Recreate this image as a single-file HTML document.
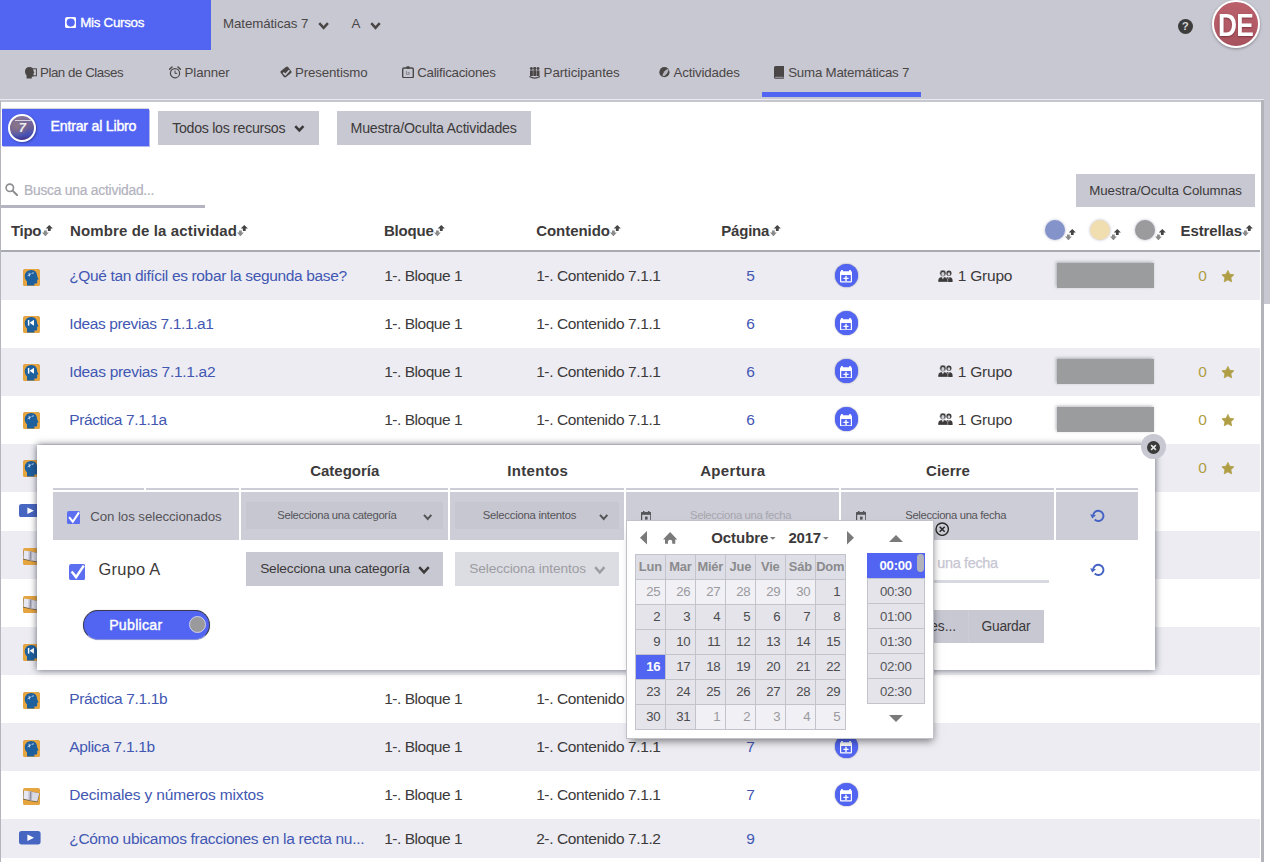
<!DOCTYPE html>
<html lang="es"><head><meta charset="utf-8"><title>Suma Matemáticas 7</title>
<style>
html,body{margin:0;padding:0}
body{width:1270px;height:862px;overflow:hidden;position:relative;background:#c8c8d2;font-family:'Liberation Sans', sans-serif;}
</style></head><body>
<div style="position:absolute;left:1.20px;top:101.40px;width:1259.80px;height:760.60px;background:#fff;"></div>
<div style="position:absolute;left:0.00px;top:98.70px;width:1264.40px;height:1.30px;background:#e9e9ef;"></div>
<div style="position:absolute;left:0.00px;top:100.00px;width:1264.40px;height:1.60px;background:#c6c6cf;"></div>
<div style="position:absolute;left:0.00px;top:101.40px;width:1.40px;height:760.60px;background:#b4b4bd;"></div>
<div style="position:absolute;left:1261.00px;top:100.00px;width:3.00px;height:762.00px;background:#b3b3ba;"></div>
<div style="position:absolute;left:1264.00px;top:304.40px;width:6.00px;height:557.60px;background:#fff;"></div>
<div style="position:absolute;left:0.00px;top:0.00px;width:211.00px;height:50.00px;background:#5165f2;"></div>
<svg style="position:absolute;left:64.80px;top:16.80px;" width="11.40" height="11.20" viewBox="0 0 11.4 11.2"><rect width="11.4" height="11.2" rx="2.2" fill="#fff"/><circle cx="5.7" cy="5.6" r="4.1" fill="#5165f2"/></svg>
<span style="position:absolute;left:80.20px;top:15.61px;font-size:13.4px;line-height:1;color:#fff;white-space:nowrap;letter-spacing:-0.298px;-webkit-text-stroke:0.35px #fff;">Mis Cursos</span>
<span style="position:absolute;left:223.00px;top:16.70px;font-size:13.3px;line-height:1;color:#4a4646;white-space:nowrap;letter-spacing:-0.091px;">Matemáticas 7</span>
<svg style="position:absolute;left:317.40px;top:20.60px;" width="13.20" height="9.40" viewBox="-1 -1 13.20 9.40"><polyline points="1.25,1.12 5.60,5.85 9.95,1.12" fill="none" stroke="#4a4646" stroke-width="2.5" stroke-linejoin="miter"/></svg>
<span style="position:absolute;left:351.60px;top:16.70px;font-size:13.3px;line-height:1;color:#4a4646;white-space:nowrap;">A</span>
<svg style="position:absolute;left:369.00px;top:20.60px;" width="13.00" height="9.40" viewBox="-1 -1 13.00 9.40"><polyline points="1.25,1.12 5.50,5.85 9.75,1.12" fill="none" stroke="#4a4646" stroke-width="2.5" stroke-linejoin="miter"/></svg>
<div style="position:absolute;left:1177.6px;top:18.6px;width:15.2px;height:15.2px;border-radius:50%;background:#3c3c3c"></div>
<span style="position:absolute;left:1181.75px;top:20.83px;font-size:11.5px;line-height:1;color:#d4d4d8;white-space:nowrap;font-weight:700;">?</span>
<div style="position:absolute;left:1212px;top:0.2px;width:44px;height:44px;border-radius:50%;border:2px solid #fff;background:linear-gradient(#b9606b 0%,#b35b66 55%,#a5535e 100%);box-shadow:0 1px 3px rgba(0,0,0,.35)"></div>
<span style="position:absolute;left:1218.46px;top:10.23px;font-size:31.5px;line-height:1;color:#fff;white-space:nowrap;font-weight:700;transform:scaleX(0.835);transform-origin:0 0;letter-spacing:-1px;text-shadow:0 1px 2px rgba(90,30,40,.6);">DE</span>
<svg style="position:absolute;left:25.00px;top:67.20px;" width="12.00" height="11.60" viewBox="0 0 12 11.6"><rect x="6" y="1.8" width="5.4" height="7" fill="none" stroke="#4a4646" stroke-width="1"/><path d="M4.6 0 C1.6 0 0 2 0 4.6 C0 6.6 .9 7.8 1.6 8.6 L1.6 11.6 L6.8 11.6 L6.8 9.6 L8.6 9.6 L8.6 6.2 L9.4 5.6 L8.6 4.2 C8.6 1.6 7 0 4.6 0Z" fill="#4a4646"/></svg>
<span style="position:absolute;left:40.00px;top:65.69px;font-size:13.3px;line-height:1;color:#4a4646;white-space:nowrap;letter-spacing:-0.452px;">Plan de Clases</span>
<svg style="position:absolute;left:169.00px;top:66.00px;" width="12.00" height="12.80" viewBox="0 0 12 12.8"><circle cx="6" cy="7.2" r="4.6" fill="none" stroke="#4a4646" stroke-width="1.2"/><path d="M6 4.6V7.4H8.2" fill="none" stroke="#4a4646" stroke-width="1"/><path d="M.6 3.2L3 1M11.4 3.2L9 1" stroke="#4a4646" stroke-width="1.5" stroke-linecap="round"/></svg>
<span style="position:absolute;left:184.60px;top:65.69px;font-size:13.3px;line-height:1;color:#4a4646;white-space:nowrap;letter-spacing:-0.110px;">Planner</span>
<svg style="position:absolute;left:279.60px;top:66.40px;" width="12.00" height="12.00" viewBox="0 0 12 12"><rect x="1.3" y="2" width="9.4" height="8" rx="1.7" transform="rotate(-38 6 6)" fill="#4a4646"/><path d="M3.2 6.6L5.3 8.7L9.4 4.2" fill="none" stroke="#c8c8d2" stroke-width="1.7"/></svg>
<span style="position:absolute;left:295.00px;top:65.69px;font-size:13.3px;line-height:1;color:#4a4646;white-space:nowrap;letter-spacing:-0.131px;">Presentismo</span>
<svg style="position:absolute;left:402.00px;top:65.80px;" width="12.00" height="12.40" viewBox="0 0 12 12.4"><rect x=".7" y="2" width="10.6" height="9.7" rx="1.3" fill="none" stroke="#4a4646" stroke-width="1.4"/><rect x="4.4" y=".2" width="3.2" height="2.6" rx=".6" fill="#4a4646"/><path d="M4.4 5V8.4H7.2V6.4H5.6" fill="none" stroke="#77757a" stroke-width=".8"/></svg>
<span style="position:absolute;left:417.20px;top:65.69px;font-size:13.3px;line-height:1;color:#4a4646;white-space:nowrap;letter-spacing:-0.260px;">Calificaciones</span>
<svg style="position:absolute;left:529.00px;top:67.00px;" width="11.40" height="11.80" viewBox="0 0 11.4 11.8"><circle cx="2.4" cy="1.6" r="1.5" fill="#4a4646"/><circle cx="5.7" cy="1.4" r="1.5" fill="#4a4646"/><circle cx="9" cy="1.6" r="1.5" fill="#4a4646"/><rect x="1" y="3.4" width="2.9" height="5.6" fill="#4a4646"/><rect x="4.3" y="3.2" width="2.9" height="5.8" fill="#4a4646"/><rect x="7.6" y="3.4" width="2.9" height="5.6" fill="#4a4646"/><path d="M.4 9.6 Q5.7 12.6 11 9.6" fill="none" stroke="#4a4646" stroke-width="1.2"/></svg>
<span style="position:absolute;left:543.60px;top:65.69px;font-size:13.3px;line-height:1;color:#4a4646;white-space:nowrap;letter-spacing:-0.059px;">Participantes</span>
<svg style="position:absolute;left:659.00px;top:67.40px;" width="10.80" height="10.40" viewBox="0 0 10.8 10.4"><circle cx="5.4" cy="5.2" r="5.1" fill="#4a4646"/><path d="M3.4 8.6 C4.2 5.4 6.2 2.8 9.4 1.8 C9.8 4.4 8 7.6 5 9.2Z" fill="#b4b4bc"/></svg>
<span style="position:absolute;left:673.60px;top:65.69px;font-size:13.3px;line-height:1;color:#4a4646;white-space:nowrap;letter-spacing:-0.178px;">Actividades</span>
<svg style="position:absolute;left:773.60px;top:66.00px;" width="10.80" height="12.80" viewBox="0 0 10.8 12.8"><path d="M0 1.6Q0 0 1.6 0H10.8V11.2H9.8V12.8H1.6Q0 12.8 0 11.2Z" fill="#4a4646"/><path d="M1.2 11.3H9.4" stroke="#c8c8d2" stroke-width=".7"/></svg>
<span style="position:absolute;left:788.20px;top:65.69px;font-size:13.3px;line-height:1;color:#4a4646;white-space:nowrap;letter-spacing:-0.216px;">Suma Matemáticas 7</span>
<div style="position:absolute;left:762.00px;top:92.00px;width:159.00px;height:5.00px;background:#5165f2;"></div>
<div style="position:absolute;left:2.00px;top:108.80px;width:147.40px;height:37.00px;background:#5165f2;box-shadow:1px 1px 0 #b4b8ea,0 -0.6px 0 #b8b8c4"></div>
<div style="position:absolute;left:7.9px;top:113.5px;width:24.5px;height:24.3px;border-radius:50%;border:2.4px solid #fff;background:radial-gradient(circle at 28% 40%,#8a7488 0%,rgba(125,105,135,0) 55%),linear-gradient(175deg,#8878a0 0%,#74669a 30%,#6c5e94 50%,#4350b8 78%,#4a2f78 100%);box-shadow:1px 1px 2px rgba(30,30,90,.5)"></div>
<div style="position:absolute;left:15.00px;top:119.80px;width:15.60px;height:0.80px;background:rgba(235,235,245,.8);"></div>
<span style="position:absolute;left:18.81px;top:120.95px;font-size:13px;line-height:1;color:#ececf0;white-space:nowrap;font-weight:700;font-style:italic;">7</span>
<span style="position:absolute;left:50.57px;top:118.83px;font-size:14.2px;line-height:1;color:#fff;white-space:nowrap;letter-spacing:-0.230px;-webkit-text-stroke:0.4px #fff;">Entrar al Libro</span>
<div style="position:absolute;left:158.00px;top:111.00px;width:161.00px;height:33.60px;background:#c8c8d2;"></div>
<span style="position:absolute;left:172.17px;top:120.83px;font-size:14.2px;line-height:1;color:#3c3a3a;white-space:nowrap;letter-spacing:-0.291px;">Todos los recursos</span>
<svg style="position:absolute;left:293.30px;top:123.60px;" width="12.70" height="9.00" viewBox="-1 -1 12.70 9.00"><polyline points="1.25,1.12 5.35,5.45 9.45,1.12" fill="none" stroke="#3c3a3a" stroke-width="2.5" stroke-linejoin="miter"/></svg>
<div style="position:absolute;left:337.00px;top:111.00px;width:194.00px;height:33.60px;background:#c8c8d2;"></div>
<span style="position:absolute;left:350.57px;top:120.83px;font-size:14.2px;line-height:1;color:#3c3a3a;white-space:nowrap;letter-spacing:-0.225px;">Muestra/Oculta Actividades</span>
<svg style="position:absolute;left:5.40px;top:183.40px;" width="13.00" height="13.00" viewBox="0 0 13 13"><circle cx="4.8" cy="4.8" r="3.7" fill="none" stroke="#8c8c90" stroke-width="1.6"/><path d="M7.6 7.6L12 12" stroke="#8c8c90" stroke-width="2" stroke-linecap="round"/></svg>
<span style="position:absolute;left:23.99px;top:183.97px;font-size:13.8px;line-height:1;color:#b2b2bd;white-space:nowrap;letter-spacing:-0.216px;-webkit-text-stroke:0.2px #b2b2bd;">Busca una actividad...</span>
<div style="position:absolute;left:1.40px;top:205.40px;width:203.40px;height:2.60px;background:#b4b4c0;"></div>
<div style="position:absolute;left:1076.00px;top:174.00px;width:179.20px;height:32.80px;background:#c8c8d2;"></div>
<span style="position:absolute;left:1089.20px;top:183.69px;font-size:13.3px;line-height:1;color:#3c3a3a;white-space:nowrap;letter-spacing:-0.044px;">Muestra/Oculta Columnas</span>
<span style="position:absolute;left:10.95px;top:222.85px;font-size:15px;line-height:1;color:#3c3a3a;white-space:nowrap;font-weight:700;letter-spacing:-0.276px;">Tipo</span>
<svg style="position:absolute;left:41.60px;top:224.80px;" width="11.00" height="11.60" viewBox="0 0 11 11.6"><path d="M3.4 11.4L0 7.6H2V5.4H4.8V7.6H6.8Z" fill="#8a8a8a"/><path d="M7.3 0L10.9 3.6H8.7V6H5.9V3.6H3.7Z" fill="#444"/></svg>
<span style="position:absolute;left:69.95px;top:222.85px;font-size:15px;line-height:1;color:#3c3a3a;white-space:nowrap;font-weight:700;letter-spacing:0.131px;">Nombre de la actividad</span>
<svg style="position:absolute;left:237.20px;top:224.80px;" width="11.00" height="11.60" viewBox="0 0 11 11.6"><path d="M3.4 11.4L0 7.6H2V5.4H4.8V7.6H6.8Z" fill="#8a8a8a"/><path d="M7.3 0L10.9 3.6H8.7V6H5.9V3.6H3.7Z" fill="#444"/></svg>
<span style="position:absolute;left:383.95px;top:222.85px;font-size:15px;line-height:1;color:#3c3a3a;white-space:nowrap;font-weight:700;letter-spacing:-0.185px;">Bloque</span>
<svg style="position:absolute;left:434.00px;top:224.80px;" width="11.00" height="11.60" viewBox="0 0 11 11.6"><path d="M3.4 11.4L0 7.6H2V5.4H4.8V7.6H6.8Z" fill="#8a8a8a"/><path d="M7.3 0L10.9 3.6H8.7V6H5.9V3.6H3.7Z" fill="#444"/></svg>
<span style="position:absolute;left:536.15px;top:222.85px;font-size:15px;line-height:1;color:#3c3a3a;white-space:nowrap;font-weight:700;letter-spacing:-0.039px;">Contenido</span>
<svg style="position:absolute;left:610.20px;top:224.80px;" width="11.00" height="11.60" viewBox="0 0 11 11.6"><path d="M3.4 11.4L0 7.6H2V5.4H4.8V7.6H6.8Z" fill="#8a8a8a"/><path d="M7.3 0L10.9 3.6H8.7V6H5.9V3.6H3.7Z" fill="#444"/></svg>
<span style="position:absolute;left:721.15px;top:222.85px;font-size:15px;line-height:1;color:#3c3a3a;white-space:nowrap;font-weight:700;letter-spacing:-0.175px;">Página</span>
<svg style="position:absolute;left:769.60px;top:224.80px;" width="11.00" height="11.60" viewBox="0 0 11 11.6"><path d="M3.4 11.4L0 7.6H2V5.4H4.8V7.6H6.8Z" fill="#8a8a8a"/><path d="M7.3 0L10.9 3.6H8.7V6H5.9V3.6H3.7Z" fill="#444"/></svg>
<span style="position:absolute;left:1180.55px;top:222.85px;font-size:15px;line-height:1;color:#3c3a3a;white-space:nowrap;font-weight:700;letter-spacing:-0.132px;">Estrellas</span>
<svg style="position:absolute;left:1242.20px;top:224.80px;" width="11.00" height="11.60" viewBox="0 0 11 11.6"><path d="M3.4 11.4L0 7.6H2V5.4H4.8V7.6H6.8Z" fill="#8a8a8a"/><path d="M7.3 0L10.9 3.6H8.7V6H5.9V3.6H3.7Z" fill="#444"/></svg>
<div style="position:absolute;left:1045px;top:219.8px;width:20px;height:20px;border-radius:50%;background:#8494cb;box-shadow:0 0 3px rgba(120,120,160,.55)"></div>
<svg style="position:absolute;left:1065.40px;top:228.60px;" width="11.00" height="11.60" viewBox="0 0 11 11.6"><path d="M3.4 11.4L0 7.6H2V5.4H4.8V7.6H6.8Z" fill="#8a8a8a"/><path d="M7.3 0L10.9 3.6H8.7V6H5.9V3.6H3.7Z" fill="#444"/></svg>
<div style="position:absolute;left:1090px;top:219.8px;width:20px;height:20px;border-radius:50%;background:#f1deb0;box-shadow:0 0 3px rgba(120,120,160,.55)"></div>
<svg style="position:absolute;left:1110.40px;top:228.60px;" width="11.00" height="11.60" viewBox="0 0 11 11.6"><path d="M3.4 11.4L0 7.6H2V5.4H4.8V7.6H6.8Z" fill="#8a8a8a"/><path d="M7.3 0L10.9 3.6H8.7V6H5.9V3.6H3.7Z" fill="#444"/></svg>
<div style="position:absolute;left:1135px;top:219.8px;width:20px;height:20px;border-radius:50%;background:#9b9b9d;box-shadow:0 0 3px rgba(120,120,160,.55)"></div>
<svg style="position:absolute;left:1155.40px;top:228.60px;" width="11.00" height="11.60" viewBox="0 0 11 11.6"><path d="M3.4 11.4L0 7.6H2V5.4H4.8V7.6H6.8Z" fill="#8a8a8a"/><path d="M7.3 0L10.9 3.6H8.7V6H5.9V3.6H3.7Z" fill="#444"/></svg>
<div style="position:absolute;left:1.40px;top:250.00px;width:1258.60px;height:2.40px;background:#a9a9b1;"></div>
<div style="position:absolute;left:1.40px;top:252.40px;width:1258.60px;height:47.20px;background:#ececf2;"></div>
<div style="position:absolute;left:1.40px;top:347.60px;width:1258.60px;height:48.00px;background:#ececf2;"></div>
<div style="position:absolute;left:1.40px;top:443.60px;width:1258.60px;height:48.00px;background:#ececf2;"></div>
<div style="position:absolute;left:1.40px;top:531.00px;width:1258.60px;height:48.00px;background:#ececf2;"></div>
<div style="position:absolute;left:1.40px;top:627.00px;width:1258.60px;height:48.00px;background:#ececf2;"></div>
<div style="position:absolute;left:1.40px;top:723.00px;width:1258.60px;height:48.00px;background:#ececf2;"></div>
<div style="position:absolute;left:1.40px;top:819.00px;width:1258.60px;height:38.80px;background:#ececf2;"></div>
<svg style="position:absolute;left:23.30px;top:268.50px;filter:drop-shadow(0 0 .6px rgba(120,80,20,.6));" width="17.00" height="17.00" viewBox="0 0 17 17"><rect x="0" y="0" width="17" height="17" rx="2.6" fill="#e6a53f"/><path d="M8.4 1C4.4 1 1.8 3.8 1.8 7.2C1.8 9.6 2.8 11.2 4 12.2V16.6H11.4V14.4H13.2Q14.2 14.4 14.2 13.4V10.8L15.6 10.2L14.2 7.6C14.2 3.8 12 1 8.4 1Z" fill="#1e5f9e"/><path d="M4.6 6.8L8 4.8M6 3.8L6.6 7.4M8.6 4.4L10.8 3.8" stroke="#cfe0f0" stroke-width=".9"/></svg>
<span style="position:absolute;left:69.23px;top:267.93px;font-size:15.5px;line-height:1;color:#4257b2;white-space:nowrap;letter-spacing:-0.346px;">¿Qué tan difícil es robar la segunda base?</span>
<span style="position:absolute;left:384.14px;top:267.93px;font-size:15.5px;line-height:1;color:#3c3a3a;white-space:nowrap;letter-spacing:-0.464px;">1-. Bloque 1</span>
<span style="position:absolute;left:536.13px;top:267.93px;font-size:15.5px;line-height:1;color:#3c3a3a;white-space:nowrap;letter-spacing:-0.389px;">1-. Contenido 7.1.1</span>
<span style="position:absolute;left:746.33px;top:267.93px;font-size:15.5px;line-height:1;color:#4257b2;white-space:nowrap;">5</span>
<div style="position:absolute;left:835.00px;top:263.60px;width:23.4px;height:23.4px;border-radius:50%;background:#5165f2;box-shadow:0 0 1.5px rgba(60,60,120,.8)"></div>
<svg style="position:absolute;left:840.00px;top:270.20px;" width="12.00" height="12.60" viewBox="0 0 12 12.6"><rect x="1.1" y="0" width="1.7" height="2" fill="#fff"/><rect x="9.2" y="0" width="1.7" height="2" fill="#fff"/><path d="M0 2.2Q0 1.2 1 1.2H11Q12 1.2 12 2.2V5H0Z" fill="#fff"/><rect x=".6" y="4.4" width="10.8" height="7.5" rx=".6" fill="none" stroke="#fff" stroke-width="1.2"/><path d="M6 5.8V11M3.4 8.4H8.6" stroke="#fff" stroke-width="1.4"/></svg>
<svg style="position:absolute;left:938.30px;top:269.60px;" width="15.00" height="12.20" viewBox="0 0 15 12.2"><circle cx="10.9" cy="3.2" r="2.6" fill="#3c3a3a"/><ellipse cx="10.9" cy="3.9" rx="1.35" ry="1.6" fill="#cfcfd6"/><path d="M7.2 12V10.6Q7.2 7 10.9 7Q14.6 7 14.6 10.6V12Z" fill="#3c3a3a"/><path d="M10 7.2L10.9 9L11.8 7.2Z" fill="#e4e4ea"/><circle cx="4.9" cy="3.2" r="3.1" fill="#3c3a3a" stroke="#ececf2" stroke-width=".5"/><ellipse cx="4.9" cy="4" rx="1.6" ry="1.9" fill="#cfcfd6"/><path d="M0 12.2V10.6Q0 6.8 4.9 6.8Q9.8 6.8 9.8 10.6V12.2Z" fill="#3c3a3a" stroke="#ececf2" stroke-width=".5"/><path d="M3.8 7L4.9 9.4L6 7Z" fill="#e4e4ea"/></svg>
<span style="position:absolute;left:957.74px;top:267.93px;font-size:15.5px;line-height:1;color:#3c3a3a;white-space:nowrap;letter-spacing:-0.210px;">1 Grupo</span>
<div style="position:absolute;left:1057.00px;top:263.40px;width:97.00px;height:24.60px;background:#9b9c9e;box-shadow:-1px -1px 3px rgba(90,90,110,.45)"></div>
<span style="position:absolute;left:1198.34px;top:267.93px;font-size:15.5px;line-height:1;color:#b09e45;white-space:nowrap;">0</span>
<svg style="position:absolute;left:1220.00px;top:268.00px;" width="16.00" height="16.00" viewBox="0 0 16 16"><polygon points="7.90,2.45 9.72,6.24 13.89,6.80 10.85,9.71 11.60,13.85 7.90,11.85 4.20,13.85 4.95,9.71 1.91,6.80 6.08,6.24" fill="#b09e45" stroke="#b09e45" stroke-width=".8" stroke-linejoin="round"/></svg>
<svg style="position:absolute;left:23.30px;top:316.10px;filter:drop-shadow(0 0 .6px rgba(120,80,20,.6));" width="17.00" height="17.00" viewBox="0 0 17 17"><rect x="0" y="0" width="17" height="17" rx="2.6" fill="#e6a53f"/><path d="M8.4 1C4.4 1 1.8 3.8 1.8 7.2C1.8 9.6 2.8 11.2 4 12.2V16.6H11.4V14.4H13.2Q14.2 14.4 14.2 13.4V10.8L15.6 10.2L14.2 7.6C14.2 3.8 12 1 8.4 1Z" fill="#1e5f9e"/><path d="M5.6 4V9.6" stroke="#fff" stroke-width="1.5"/><path d="M11 3.8V9.8L6.6 6.8Z" fill="#fff"/></svg>
<span style="position:absolute;left:69.23px;top:315.53px;font-size:15.5px;line-height:1;color:#4257b2;white-space:nowrap;letter-spacing:-0.371px;">Ideas previas 7.1.1.a1</span>
<span style="position:absolute;left:384.14px;top:315.53px;font-size:15.5px;line-height:1;color:#3c3a3a;white-space:nowrap;letter-spacing:-0.464px;">1-. Bloque 1</span>
<span style="position:absolute;left:536.13px;top:315.53px;font-size:15.5px;line-height:1;color:#3c3a3a;white-space:nowrap;letter-spacing:-0.389px;">1-. Contenido 7.1.1</span>
<span style="position:absolute;left:746.33px;top:315.53px;font-size:15.5px;line-height:1;color:#4257b2;white-space:nowrap;">6</span>
<div style="position:absolute;left:835.00px;top:311.20px;width:23.4px;height:23.4px;border-radius:50%;background:#5165f2;box-shadow:0 0 1.5px rgba(60,60,120,.8)"></div>
<svg style="position:absolute;left:840.00px;top:317.80px;" width="12.00" height="12.60" viewBox="0 0 12 12.6"><rect x="1.1" y="0" width="1.7" height="2" fill="#fff"/><rect x="9.2" y="0" width="1.7" height="2" fill="#fff"/><path d="M0 2.2Q0 1.2 1 1.2H11Q12 1.2 12 2.2V5H0Z" fill="#fff"/><rect x=".6" y="4.4" width="10.8" height="7.5" rx=".6" fill="none" stroke="#fff" stroke-width="1.2"/><path d="M6 5.8V11M3.4 8.4H8.6" stroke="#fff" stroke-width="1.4"/></svg>
<svg style="position:absolute;left:23.30px;top:364.10px;filter:drop-shadow(0 0 .6px rgba(120,80,20,.6));" width="17.00" height="17.00" viewBox="0 0 17 17"><rect x="0" y="0" width="17" height="17" rx="2.6" fill="#e6a53f"/><path d="M8.4 1C4.4 1 1.8 3.8 1.8 7.2C1.8 9.6 2.8 11.2 4 12.2V16.6H11.4V14.4H13.2Q14.2 14.4 14.2 13.4V10.8L15.6 10.2L14.2 7.6C14.2 3.8 12 1 8.4 1Z" fill="#1e5f9e"/><path d="M5.6 4V9.6" stroke="#fff" stroke-width="1.5"/><path d="M11 3.8V9.8L6.6 6.8Z" fill="#fff"/></svg>
<span style="position:absolute;left:69.23px;top:363.53px;font-size:15.5px;line-height:1;color:#4257b2;white-space:nowrap;letter-spacing:-0.297px;">Ideas previas 7.1.1.a2</span>
<span style="position:absolute;left:384.14px;top:363.53px;font-size:15.5px;line-height:1;color:#3c3a3a;white-space:nowrap;letter-spacing:-0.464px;">1-. Bloque 1</span>
<span style="position:absolute;left:536.13px;top:363.53px;font-size:15.5px;line-height:1;color:#3c3a3a;white-space:nowrap;letter-spacing:-0.389px;">1-. Contenido 7.1.1</span>
<span style="position:absolute;left:746.33px;top:363.53px;font-size:15.5px;line-height:1;color:#4257b2;white-space:nowrap;">6</span>
<div style="position:absolute;left:835.00px;top:359.20px;width:23.4px;height:23.4px;border-radius:50%;background:#5165f2;box-shadow:0 0 1.5px rgba(60,60,120,.8)"></div>
<svg style="position:absolute;left:840.00px;top:365.80px;" width="12.00" height="12.60" viewBox="0 0 12 12.6"><rect x="1.1" y="0" width="1.7" height="2" fill="#fff"/><rect x="9.2" y="0" width="1.7" height="2" fill="#fff"/><path d="M0 2.2Q0 1.2 1 1.2H11Q12 1.2 12 2.2V5H0Z" fill="#fff"/><rect x=".6" y="4.4" width="10.8" height="7.5" rx=".6" fill="none" stroke="#fff" stroke-width="1.2"/><path d="M6 5.8V11M3.4 8.4H8.6" stroke="#fff" stroke-width="1.4"/></svg>
<svg style="position:absolute;left:938.30px;top:365.20px;" width="15.00" height="12.20" viewBox="0 0 15 12.2"><circle cx="10.9" cy="3.2" r="2.6" fill="#3c3a3a"/><ellipse cx="10.9" cy="3.9" rx="1.35" ry="1.6" fill="#cfcfd6"/><path d="M7.2 12V10.6Q7.2 7 10.9 7Q14.6 7 14.6 10.6V12Z" fill="#3c3a3a"/><path d="M10 7.2L10.9 9L11.8 7.2Z" fill="#e4e4ea"/><circle cx="4.9" cy="3.2" r="3.1" fill="#3c3a3a" stroke="#ececf2" stroke-width=".5"/><ellipse cx="4.9" cy="4" rx="1.6" ry="1.9" fill="#cfcfd6"/><path d="M0 12.2V10.6Q0 6.8 4.9 6.8Q9.8 6.8 9.8 10.6V12.2Z" fill="#3c3a3a" stroke="#ececf2" stroke-width=".5"/><path d="M3.8 7L4.9 9.4L6 7Z" fill="#e4e4ea"/></svg>
<span style="position:absolute;left:957.74px;top:363.53px;font-size:15.5px;line-height:1;color:#3c3a3a;white-space:nowrap;letter-spacing:-0.210px;">1 Grupo</span>
<div style="position:absolute;left:1057.00px;top:359.00px;width:97.00px;height:24.60px;background:#9b9c9e;box-shadow:-1px -1px 3px rgba(90,90,110,.45)"></div>
<span style="position:absolute;left:1198.34px;top:363.53px;font-size:15.5px;line-height:1;color:#b09e45;white-space:nowrap;">0</span>
<svg style="position:absolute;left:1220.00px;top:363.60px;" width="16.00" height="16.00" viewBox="0 0 16 16"><polygon points="7.90,2.45 9.72,6.24 13.89,6.80 10.85,9.71 11.60,13.85 7.90,11.85 4.20,13.85 4.95,9.71 1.91,6.80 6.08,6.24" fill="#b09e45" stroke="#b09e45" stroke-width=".8" stroke-linejoin="round"/></svg>
<svg style="position:absolute;left:23.30px;top:412.10px;filter:drop-shadow(0 0 .6px rgba(120,80,20,.6));" width="17.00" height="17.00" viewBox="0 0 17 17"><rect x="0" y="0" width="17" height="17" rx="2.6" fill="#e6a53f"/><path d="M8.4 1C4.4 1 1.8 3.8 1.8 7.2C1.8 9.6 2.8 11.2 4 12.2V16.6H11.4V14.4H13.2Q14.2 14.4 14.2 13.4V10.8L15.6 10.2L14.2 7.6C14.2 3.8 12 1 8.4 1Z" fill="#1e5f9e"/><path d="M4.6 6.8L8 4.8M6 3.8L6.6 7.4M8.6 4.4L10.8 3.8" stroke="#cfe0f0" stroke-width=".9"/></svg>
<span style="position:absolute;left:69.23px;top:411.53px;font-size:15.5px;line-height:1;color:#4257b2;white-space:nowrap;letter-spacing:-0.390px;">Práctica 7.1.1a</span>
<span style="position:absolute;left:384.14px;top:411.53px;font-size:15.5px;line-height:1;color:#3c3a3a;white-space:nowrap;letter-spacing:-0.464px;">1-. Bloque 1</span>
<span style="position:absolute;left:536.13px;top:411.53px;font-size:15.5px;line-height:1;color:#3c3a3a;white-space:nowrap;letter-spacing:-0.389px;">1-. Contenido 7.1.1</span>
<span style="position:absolute;left:746.33px;top:411.53px;font-size:15.5px;line-height:1;color:#4257b2;white-space:nowrap;">6</span>
<div style="position:absolute;left:835.00px;top:407.20px;width:23.4px;height:23.4px;border-radius:50%;background:#5165f2;box-shadow:0 0 1.5px rgba(60,60,120,.8)"></div>
<svg style="position:absolute;left:840.00px;top:413.80px;" width="12.00" height="12.60" viewBox="0 0 12 12.6"><rect x="1.1" y="0" width="1.7" height="2" fill="#fff"/><rect x="9.2" y="0" width="1.7" height="2" fill="#fff"/><path d="M0 2.2Q0 1.2 1 1.2H11Q12 1.2 12 2.2V5H0Z" fill="#fff"/><rect x=".6" y="4.4" width="10.8" height="7.5" rx=".6" fill="none" stroke="#fff" stroke-width="1.2"/><path d="M6 5.8V11M3.4 8.4H8.6" stroke="#fff" stroke-width="1.4"/></svg>
<svg style="position:absolute;left:938.30px;top:413.20px;" width="15.00" height="12.20" viewBox="0 0 15 12.2"><circle cx="10.9" cy="3.2" r="2.6" fill="#3c3a3a"/><ellipse cx="10.9" cy="3.9" rx="1.35" ry="1.6" fill="#cfcfd6"/><path d="M7.2 12V10.6Q7.2 7 10.9 7Q14.6 7 14.6 10.6V12Z" fill="#3c3a3a"/><path d="M10 7.2L10.9 9L11.8 7.2Z" fill="#e4e4ea"/><circle cx="4.9" cy="3.2" r="3.1" fill="#3c3a3a" stroke="#ececf2" stroke-width=".5"/><ellipse cx="4.9" cy="4" rx="1.6" ry="1.9" fill="#cfcfd6"/><path d="M0 12.2V10.6Q0 6.8 4.9 6.8Q9.8 6.8 9.8 10.6V12.2Z" fill="#3c3a3a" stroke="#ececf2" stroke-width=".5"/><path d="M3.8 7L4.9 9.4L6 7Z" fill="#e4e4ea"/></svg>
<span style="position:absolute;left:957.74px;top:411.53px;font-size:15.5px;line-height:1;color:#3c3a3a;white-space:nowrap;letter-spacing:-0.210px;">1 Grupo</span>
<div style="position:absolute;left:1057.00px;top:407.00px;width:97.00px;height:24.60px;background:#9b9c9e;box-shadow:-1px -1px 3px rgba(90,90,110,.45)"></div>
<span style="position:absolute;left:1198.34px;top:411.53px;font-size:15.5px;line-height:1;color:#b09e45;white-space:nowrap;">0</span>
<svg style="position:absolute;left:1220.00px;top:411.60px;" width="16.00" height="16.00" viewBox="0 0 16 16"><polygon points="7.90,2.45 9.72,6.24 13.89,6.80 10.85,9.71 11.60,13.85 7.90,11.85 4.20,13.85 4.95,9.71 1.91,6.80 6.08,6.24" fill="#b09e45" stroke="#b09e45" stroke-width=".8" stroke-linejoin="round"/></svg>
<svg style="position:absolute;left:23.30px;top:460.10px;filter:drop-shadow(0 0 .6px rgba(120,80,20,.6));" width="17.00" height="17.00" viewBox="0 0 17 17"><rect x="0" y="0" width="17" height="17" rx="2.6" fill="#e6a53f"/><path d="M8.4 1C4.4 1 1.8 3.8 1.8 7.2C1.8 9.6 2.8 11.2 4 12.2V16.6H11.4V14.4H13.2Q14.2 14.4 14.2 13.4V10.8L15.6 10.2L14.2 7.6C14.2 3.8 12 1 8.4 1Z" fill="#1e5f9e"/><path d="M4.6 6.8L8 4.8M6 3.8L6.6 7.4M8.6 4.4L10.8 3.8" stroke="#cfe0f0" stroke-width=".9"/></svg>
<span style="position:absolute;left:69.23px;top:459.53px;font-size:15.5px;line-height:1;color:#4257b2;white-space:nowrap;">Aplica 7.1.1a</span>
<span style="position:absolute;left:384.14px;top:459.53px;font-size:15.5px;line-height:1;color:#3c3a3a;white-space:nowrap;letter-spacing:-0.464px;">1-. Bloque 1</span>
<span style="position:absolute;left:536.13px;top:459.53px;font-size:15.5px;line-height:1;color:#3c3a3a;white-space:nowrap;letter-spacing:-0.389px;">1-. Contenido 7.1.1</span>
<span style="position:absolute;left:746.33px;top:459.53px;font-size:15.5px;line-height:1;color:#4257b2;white-space:nowrap;">6</span>
<div style="position:absolute;left:835.00px;top:455.20px;width:23.4px;height:23.4px;border-radius:50%;background:#5165f2;box-shadow:0 0 1.5px rgba(60,60,120,.8)"></div>
<svg style="position:absolute;left:840.00px;top:461.80px;" width="12.00" height="12.60" viewBox="0 0 12 12.6"><rect x="1.1" y="0" width="1.7" height="2" fill="#fff"/><rect x="9.2" y="0" width="1.7" height="2" fill="#fff"/><path d="M0 2.2Q0 1.2 1 1.2H11Q12 1.2 12 2.2V5H0Z" fill="#fff"/><rect x=".6" y="4.4" width="10.8" height="7.5" rx=".6" fill="none" stroke="#fff" stroke-width="1.2"/><path d="M6 5.8V11M3.4 8.4H8.6" stroke="#fff" stroke-width="1.4"/></svg>
<span style="position:absolute;left:1198.34px;top:459.53px;font-size:15.5px;line-height:1;color:#b09e45;white-space:nowrap;">0</span>
<svg style="position:absolute;left:1220.00px;top:459.60px;" width="16.00" height="16.00" viewBox="0 0 16 16"><polygon points="7.90,2.45 9.72,6.24 13.89,6.80 10.85,9.71 11.60,13.85 7.90,11.85 4.20,13.85 4.95,9.71 1.91,6.80 6.08,6.24" fill="#b09e45" stroke="#b09e45" stroke-width=".8" stroke-linejoin="round"/></svg>
<svg style="position:absolute;left:19.00px;top:504.10px;" width="21.60" height="13.40" viewBox="0 0 21.6 13.4"><rect width="21.6" height="13.4" rx="2.6" fill="#4766c1"/><path d="M8.4 3.4V10L15 6.7Z" fill="#fff"/></svg>
<span style="position:absolute;left:69.23px;top:503.53px;font-size:15.5px;line-height:1;color:#4257b2;white-space:nowrap;">Fracciones y decimales</span>
<span style="position:absolute;left:384.14px;top:503.53px;font-size:15.5px;line-height:1;color:#3c3a3a;white-space:nowrap;letter-spacing:-0.464px;">1-. Bloque 1</span>
<span style="position:absolute;left:536.13px;top:503.53px;font-size:15.5px;line-height:1;color:#3c3a3a;white-space:nowrap;letter-spacing:-0.389px;">1-. Contenido 7.1.1</span>
<span style="position:absolute;left:746.33px;top:503.53px;font-size:15.5px;line-height:1;color:#4257b2;white-space:nowrap;">7</span>
<svg style="position:absolute;left:23.30px;top:547.50px;filter:drop-shadow(0 0 .6px rgba(120,80,20,.6));" width="17.00" height="17.00" viewBox="0 0 17 17"><rect x="0" y="0" width="17" height="17" rx="2.6" fill="#e6a53f"/><path d="M.5 2.9L7.7 3.6L16.6 5.2L14.6 14.2L7 13.1L.1 11.6Z" fill="#6b5638"/><path d="M.9 2.6L7.6 3.6L7.1 12.3L.4 10.8Z" fill="#e8e8f2"/><path d="M7.6 3.6L16.3 5.3L14.3 13.4L7.1 12.3Z" fill="#dadae6"/><path d="M5.6 3.4L7.6 3.6L7.1 12.3L5.2 11.9Z" fill="#c4c4d2"/><path d="M7.6 3.6L9.4 4L8.8 12.6L7.1 12.3Z" fill="#b4b4c4"/><path d="M7.6 3.6L7.1 12.4" stroke="#77778a" stroke-width=".7"/></svg>
<span style="position:absolute;left:69.23px;top:546.93px;font-size:15.5px;line-height:1;color:#4257b2;white-space:nowrap;">Fracciones decimales</span>
<span style="position:absolute;left:384.14px;top:546.93px;font-size:15.5px;line-height:1;color:#3c3a3a;white-space:nowrap;letter-spacing:-0.464px;">1-. Bloque 1</span>
<span style="position:absolute;left:536.13px;top:546.93px;font-size:15.5px;line-height:1;color:#3c3a3a;white-space:nowrap;letter-spacing:-0.389px;">1-. Contenido 7.1.1</span>
<span style="position:absolute;left:746.33px;top:546.93px;font-size:15.5px;line-height:1;color:#4257b2;white-space:nowrap;">7</span>
<div style="position:absolute;left:835.00px;top:542.60px;width:23.4px;height:23.4px;border-radius:50%;background:#5165f2;box-shadow:0 0 1.5px rgba(60,60,120,.8)"></div>
<svg style="position:absolute;left:840.00px;top:549.20px;" width="12.00" height="12.60" viewBox="0 0 12 12.6"><rect x="1.1" y="0" width="1.7" height="2" fill="#fff"/><rect x="9.2" y="0" width="1.7" height="2" fill="#fff"/><path d="M0 2.2Q0 1.2 1 1.2H11Q12 1.2 12 2.2V5H0Z" fill="#fff"/><rect x=".6" y="4.4" width="10.8" height="7.5" rx=".6" fill="none" stroke="#fff" stroke-width="1.2"/><path d="M6 5.8V11M3.4 8.4H8.6" stroke="#fff" stroke-width="1.4"/></svg>
<svg style="position:absolute;left:23.30px;top:595.50px;filter:drop-shadow(0 0 .6px rgba(120,80,20,.6));" width="17.00" height="17.00" viewBox="0 0 17 17"><rect x="0" y="0" width="17" height="17" rx="2.6" fill="#e6a53f"/><path d="M.5 2.9L7.7 3.6L16.6 5.2L14.6 14.2L7 13.1L.1 11.6Z" fill="#6b5638"/><path d="M.9 2.6L7.6 3.6L7.1 12.3L.4 10.8Z" fill="#e8e8f2"/><path d="M7.6 3.6L16.3 5.3L14.3 13.4L7.1 12.3Z" fill="#dadae6"/><path d="M5.6 3.4L7.6 3.6L7.1 12.3L5.2 11.9Z" fill="#c4c4d2"/><path d="M7.6 3.6L9.4 4L8.8 12.6L7.1 12.3Z" fill="#b4b4c4"/><path d="M7.6 3.6L7.1 12.4" stroke="#77778a" stroke-width=".7"/></svg>
<span style="position:absolute;left:69.23px;top:594.93px;font-size:15.5px;line-height:1;color:#4257b2;white-space:nowrap;">Números mixtos</span>
<span style="position:absolute;left:384.14px;top:594.93px;font-size:15.5px;line-height:1;color:#3c3a3a;white-space:nowrap;letter-spacing:-0.464px;">1-. Bloque 1</span>
<span style="position:absolute;left:536.13px;top:594.93px;font-size:15.5px;line-height:1;color:#3c3a3a;white-space:nowrap;letter-spacing:-0.389px;">1-. Contenido 7.1.1</span>
<span style="position:absolute;left:746.33px;top:594.93px;font-size:15.5px;line-height:1;color:#4257b2;white-space:nowrap;">7</span>
<div style="position:absolute;left:835.00px;top:590.60px;width:23.4px;height:23.4px;border-radius:50%;background:#5165f2;box-shadow:0 0 1.5px rgba(60,60,120,.8)"></div>
<svg style="position:absolute;left:840.00px;top:597.20px;" width="12.00" height="12.60" viewBox="0 0 12 12.6"><rect x="1.1" y="0" width="1.7" height="2" fill="#fff"/><rect x="9.2" y="0" width="1.7" height="2" fill="#fff"/><path d="M0 2.2Q0 1.2 1 1.2H11Q12 1.2 12 2.2V5H0Z" fill="#fff"/><rect x=".6" y="4.4" width="10.8" height="7.5" rx=".6" fill="none" stroke="#fff" stroke-width="1.2"/><path d="M6 5.8V11M3.4 8.4H8.6" stroke="#fff" stroke-width="1.4"/></svg>
<svg style="position:absolute;left:23.30px;top:643.50px;filter:drop-shadow(0 0 .6px rgba(120,80,20,.6));" width="17.00" height="17.00" viewBox="0 0 17 17"><rect x="0" y="0" width="17" height="17" rx="2.6" fill="#e6a53f"/><path d="M8.4 1C4.4 1 1.8 3.8 1.8 7.2C1.8 9.6 2.8 11.2 4 12.2V16.6H11.4V14.4H13.2Q14.2 14.4 14.2 13.4V10.8L15.6 10.2L14.2 7.6C14.2 3.8 12 1 8.4 1Z" fill="#1e5f9e"/><path d="M5.6 4V9.6" stroke="#fff" stroke-width="1.5"/><path d="M11 3.8V9.8L6.6 6.8Z" fill="#fff"/></svg>
<span style="position:absolute;left:69.23px;top:642.93px;font-size:15.5px;line-height:1;color:#4257b2;white-space:nowrap;">Ideas previas 7.1.1.b</span>
<span style="position:absolute;left:384.14px;top:642.93px;font-size:15.5px;line-height:1;color:#3c3a3a;white-space:nowrap;letter-spacing:-0.464px;">1-. Bloque 1</span>
<span style="position:absolute;left:536.13px;top:642.93px;font-size:15.5px;line-height:1;color:#3c3a3a;white-space:nowrap;letter-spacing:-0.389px;">1-. Contenido 7.1.1</span>
<span style="position:absolute;left:746.33px;top:642.93px;font-size:15.5px;line-height:1;color:#4257b2;white-space:nowrap;">7</span>
<div style="position:absolute;left:835.00px;top:638.60px;width:23.4px;height:23.4px;border-radius:50%;background:#5165f2;box-shadow:0 0 1.5px rgba(60,60,120,.8)"></div>
<svg style="position:absolute;left:840.00px;top:645.20px;" width="12.00" height="12.60" viewBox="0 0 12 12.6"><rect x="1.1" y="0" width="1.7" height="2" fill="#fff"/><rect x="9.2" y="0" width="1.7" height="2" fill="#fff"/><path d="M0 2.2Q0 1.2 1 1.2H11Q12 1.2 12 2.2V5H0Z" fill="#fff"/><rect x=".6" y="4.4" width="10.8" height="7.5" rx=".6" fill="none" stroke="#fff" stroke-width="1.2"/><path d="M6 5.8V11M3.4 8.4H8.6" stroke="#fff" stroke-width="1.4"/></svg>
<svg style="position:absolute;left:23.30px;top:691.50px;filter:drop-shadow(0 0 .6px rgba(120,80,20,.6));" width="17.00" height="17.00" viewBox="0 0 17 17"><rect x="0" y="0" width="17" height="17" rx="2.6" fill="#e6a53f"/><path d="M8.4 1C4.4 1 1.8 3.8 1.8 7.2C1.8 9.6 2.8 11.2 4 12.2V16.6H11.4V14.4H13.2Q14.2 14.4 14.2 13.4V10.8L15.6 10.2L14.2 7.6C14.2 3.8 12 1 8.4 1Z" fill="#1e5f9e"/><path d="M4.6 6.8L8 4.8M6 3.8L6.6 7.4M8.6 4.4L10.8 3.8" stroke="#cfe0f0" stroke-width=".9"/></svg>
<span style="position:absolute;left:69.23px;top:690.93px;font-size:15.5px;line-height:1;color:#4257b2;white-space:nowrap;letter-spacing:-0.362px;">Práctica 7.1.1b</span>
<span style="position:absolute;left:384.14px;top:690.93px;font-size:15.5px;line-height:1;color:#3c3a3a;white-space:nowrap;letter-spacing:-0.464px;">1-. Bloque 1</span>
<span style="position:absolute;left:536.13px;top:690.93px;font-size:15.5px;line-height:1;color:#3c3a3a;white-space:nowrap;letter-spacing:-0.389px;">1-. Contenido 7.1.1</span>
<span style="position:absolute;left:746.33px;top:690.93px;font-size:15.5px;line-height:1;color:#4257b2;white-space:nowrap;">7</span>
<div style="position:absolute;left:835.00px;top:686.60px;width:23.4px;height:23.4px;border-radius:50%;background:#5165f2;box-shadow:0 0 1.5px rgba(60,60,120,.8)"></div>
<svg style="position:absolute;left:840.00px;top:693.20px;" width="12.00" height="12.60" viewBox="0 0 12 12.6"><rect x="1.1" y="0" width="1.7" height="2" fill="#fff"/><rect x="9.2" y="0" width="1.7" height="2" fill="#fff"/><path d="M0 2.2Q0 1.2 1 1.2H11Q12 1.2 12 2.2V5H0Z" fill="#fff"/><rect x=".6" y="4.4" width="10.8" height="7.5" rx=".6" fill="none" stroke="#fff" stroke-width="1.2"/><path d="M6 5.8V11M3.4 8.4H8.6" stroke="#fff" stroke-width="1.4"/></svg>
<svg style="position:absolute;left:23.30px;top:739.50px;filter:drop-shadow(0 0 .6px rgba(120,80,20,.6));" width="17.00" height="17.00" viewBox="0 0 17 17"><rect x="0" y="0" width="17" height="17" rx="2.6" fill="#e6a53f"/><path d="M8.4 1C4.4 1 1.8 3.8 1.8 7.2C1.8 9.6 2.8 11.2 4 12.2V16.6H11.4V14.4H13.2Q14.2 14.4 14.2 13.4V10.8L15.6 10.2L14.2 7.6C14.2 3.8 12 1 8.4 1Z" fill="#1e5f9e"/><path d="M4.6 6.8L8 4.8M6 3.8L6.6 7.4M8.6 4.4L10.8 3.8" stroke="#cfe0f0" stroke-width=".9"/></svg>
<span style="position:absolute;left:69.23px;top:738.93px;font-size:15.5px;line-height:1;color:#4257b2;white-space:nowrap;letter-spacing:-0.310px;">Aplica 7.1.1b</span>
<span style="position:absolute;left:384.14px;top:738.93px;font-size:15.5px;line-height:1;color:#3c3a3a;white-space:nowrap;letter-spacing:-0.464px;">1-. Bloque 1</span>
<span style="position:absolute;left:536.13px;top:738.93px;font-size:15.5px;line-height:1;color:#3c3a3a;white-space:nowrap;letter-spacing:-0.389px;">1-. Contenido 7.1.1</span>
<span style="position:absolute;left:746.33px;top:738.93px;font-size:15.5px;line-height:1;color:#4257b2;white-space:nowrap;">7</span>
<div style="position:absolute;left:835.00px;top:734.60px;width:23.4px;height:23.4px;border-radius:50%;background:#5165f2;box-shadow:0 0 1.5px rgba(60,60,120,.8)"></div>
<svg style="position:absolute;left:840.00px;top:741.20px;" width="12.00" height="12.60" viewBox="0 0 12 12.6"><rect x="1.1" y="0" width="1.7" height="2" fill="#fff"/><rect x="9.2" y="0" width="1.7" height="2" fill="#fff"/><path d="M0 2.2Q0 1.2 1 1.2H11Q12 1.2 12 2.2V5H0Z" fill="#fff"/><rect x=".6" y="4.4" width="10.8" height="7.5" rx=".6" fill="none" stroke="#fff" stroke-width="1.2"/><path d="M6 5.8V11M3.4 8.4H8.6" stroke="#fff" stroke-width="1.4"/></svg>
<svg style="position:absolute;left:23.30px;top:787.50px;filter:drop-shadow(0 0 .6px rgba(120,80,20,.6));" width="17.00" height="17.00" viewBox="0 0 17 17"><rect x="0" y="0" width="17" height="17" rx="2.6" fill="#e6a53f"/><path d="M.5 2.9L7.7 3.6L16.6 5.2L14.6 14.2L7 13.1L.1 11.6Z" fill="#6b5638"/><path d="M.9 2.6L7.6 3.6L7.1 12.3L.4 10.8Z" fill="#e8e8f2"/><path d="M7.6 3.6L16.3 5.3L14.3 13.4L7.1 12.3Z" fill="#dadae6"/><path d="M5.6 3.4L7.6 3.6L7.1 12.3L5.2 11.9Z" fill="#c4c4d2"/><path d="M7.6 3.6L9.4 4L8.8 12.6L7.1 12.3Z" fill="#b4b4c4"/><path d="M7.6 3.6L7.1 12.4" stroke="#77778a" stroke-width=".7"/></svg>
<span style="position:absolute;left:69.23px;top:786.93px;font-size:15.5px;line-height:1;color:#4257b2;white-space:nowrap;letter-spacing:-0.139px;">Decimales y números mixtos</span>
<span style="position:absolute;left:384.14px;top:786.93px;font-size:15.5px;line-height:1;color:#3c3a3a;white-space:nowrap;letter-spacing:-0.464px;">1-. Bloque 1</span>
<span style="position:absolute;left:536.13px;top:786.93px;font-size:15.5px;line-height:1;color:#3c3a3a;white-space:nowrap;letter-spacing:-0.389px;">1-. Contenido 7.1.1</span>
<span style="position:absolute;left:746.33px;top:786.93px;font-size:15.5px;line-height:1;color:#4257b2;white-space:nowrap;">7</span>
<div style="position:absolute;left:835.00px;top:782.60px;width:23.4px;height:23.4px;border-radius:50%;background:#5165f2;box-shadow:0 0 1.5px rgba(60,60,120,.8)"></div>
<svg style="position:absolute;left:840.00px;top:789.20px;" width="12.00" height="12.60" viewBox="0 0 12 12.6"><rect x="1.1" y="0" width="1.7" height="2" fill="#fff"/><rect x="9.2" y="0" width="1.7" height="2" fill="#fff"/><path d="M0 2.2Q0 1.2 1 1.2H11Q12 1.2 12 2.2V5H0Z" fill="#fff"/><rect x=".6" y="4.4" width="10.8" height="7.5" rx=".6" fill="none" stroke="#fff" stroke-width="1.2"/><path d="M6 5.8V11M3.4 8.4H8.6" stroke="#fff" stroke-width="1.4"/></svg>
<svg style="position:absolute;left:19.00px;top:831.20px;" width="21.60" height="13.40" viewBox="0 0 21.6 13.4"><rect width="21.6" height="13.4" rx="2.6" fill="#4766c1"/><path d="M8.4 3.4V10L15 6.7Z" fill="#fff"/></svg>
<span style="position:absolute;left:69.23px;top:830.62px;font-size:15.5px;line-height:1;color:#4257b2;white-space:nowrap;letter-spacing:-0.292px;">¿Cómo ubicamos fracciones en la recta nu...</span>
<span style="position:absolute;left:384.14px;top:830.62px;font-size:15.5px;line-height:1;color:#3c3a3a;white-space:nowrap;letter-spacing:-0.464px;">1-. Bloque 1</span>
<span style="position:absolute;left:536.13px;top:830.62px;font-size:15.5px;line-height:1;color:#3c3a3a;white-space:nowrap;letter-spacing:-0.389px;">2-. Contenido 7.1.2</span>
<span style="position:absolute;left:746.33px;top:830.62px;font-size:15.5px;line-height:1;color:#4257b2;white-space:nowrap;">9</span>
<div style="position:absolute;left:36.7px;top:444.6px;width:1118.6px;height:225.5px;background:#fff;box-shadow:0 0 7px 0 rgba(30,30,50,.66)"></div>
<span style="position:absolute;left:310.15px;top:463.25px;font-size:15px;line-height:1;color:#3c3a3a;white-space:nowrap;font-weight:700;letter-spacing:0.004px;">Categoría</span>
<span style="position:absolute;left:507.15px;top:463.25px;font-size:15px;line-height:1;color:#3c3a3a;white-space:nowrap;font-weight:700;letter-spacing:0.331px;">Intentos</span>
<span style="position:absolute;left:700.15px;top:463.25px;font-size:15px;line-height:1;color:#3c3a3a;white-space:nowrap;font-weight:700;letter-spacing:0.361px;">Apertura</span>
<span style="position:absolute;left:925.95px;top:463.25px;font-size:15px;line-height:1;color:#3c3a3a;white-space:nowrap;font-weight:700;letter-spacing:0.121px;">Cierre</span>
<div style="position:absolute;left:53.00px;top:488.00px;width:91.00px;height:1.90px;background:#cdcdd7;"></div>
<div style="position:absolute;left:146.00px;top:488.00px;width:93.00px;height:1.90px;background:#cdcdd7;"></div>
<div style="position:absolute;left:241.00px;top:488.00px;width:206.60px;height:1.90px;background:#cdcdd7;"></div>
<div style="position:absolute;left:450.00px;top:488.00px;width:173.60px;height:1.90px;background:#cdcdd7;"></div>
<div style="position:absolute;left:626.00px;top:488.00px;width:213.00px;height:1.90px;background:#cdcdd7;"></div>
<div style="position:absolute;left:841.00px;top:488.00px;width:213.00px;height:1.90px;background:#cdcdd7;"></div>
<div style="position:absolute;left:1056.40px;top:488.00px;width:81.60px;height:1.90px;background:#cdcdd7;"></div>
<div style="position:absolute;left:53.00px;top:492.00px;width:186.00px;height:47.60px;background:#cdcdd7;"></div>
<div style="position:absolute;left:241.00px;top:492.00px;width:206.60px;height:47.60px;background:#cdcdd7;"></div>
<div style="position:absolute;left:450.00px;top:492.00px;width:173.60px;height:47.60px;background:#cdcdd7;"></div>
<div style="position:absolute;left:626.00px;top:492.00px;width:213.00px;height:47.60px;background:#cdcdd7;"></div>
<div style="position:absolute;left:841.00px;top:492.00px;width:213.00px;height:47.60px;background:#cdcdd7;"></div>
<div style="position:absolute;left:1056.40px;top:492.00px;width:81.60px;height:47.60px;background:#cdcdd7;"></div>
<svg style="position:absolute;left:67.00px;top:510.80px;" width="13.20" height="13.20" viewBox="0 0 16 16"><rect width="16" height="16" rx="2.2" fill="#5b6ff0"/><path d="M2.6 7.4L7 13L14.6 1.6" fill="none" stroke="#fff" stroke-width="2.5"/></svg>
<span style="position:absolute;left:90.20px;top:509.69px;font-size:13.3px;line-height:1;color:#555458;white-space:nowrap;letter-spacing:-0.074px;">Con los seleccionados</span>
<div style="position:absolute;left:246.00px;top:502.20px;width:196.90px;height:26.50px;background:#c7c7d1;"></div>
<span style="position:absolute;left:277.26px;top:510.29px;font-size:11.3px;line-height:1;color:#555458;white-space:nowrap;letter-spacing:-0.344px;">Selecciona una categoría</span>
<svg style="position:absolute;left:422.00px;top:512.80px;" width="11.40" height="8.20" viewBox="-1 -1 11.40 8.20"><polyline points="1.00,0.90 4.70,4.96 8.40,0.90" fill="none" stroke="#555458" stroke-width="2" stroke-linejoin="miter"/></svg>
<div style="position:absolute;left:455.00px;top:502.20px;width:164.00px;height:26.50px;background:#c7c7d1;"></div>
<span style="position:absolute;left:482.66px;top:510.29px;font-size:11.3px;line-height:1;color:#555458;white-space:nowrap;letter-spacing:-0.236px;">Selecciona intentos</span>
<svg style="position:absolute;left:598.00px;top:512.80px;" width="11.40" height="8.20" viewBox="-1 -1 11.40 8.20"><polyline points="1.00,0.90 4.70,4.96 8.40,0.90" fill="none" stroke="#555458" stroke-width="2" stroke-linejoin="miter"/></svg>
<svg style="position:absolute;left:640.80px;top:511.00px;" width="10.40" height="11.00" viewBox="0 0 10.4 11"><rect x=".6" y="1.8" width="9.2" height="8.6" fill="none" stroke="#555458" stroke-width="1.2"/><rect x=".6" y="1.2" width="9.2" height="2.6" fill="#555458"/><rect x="2" y="0" width="1.5" height="2" fill="#555458"/><rect x="6.9" y="0" width="1.5" height="2" fill="#555458"/><rect x="4" y="5.6" width="2.6" height="3" fill="#555458"/></svg>
<span style="position:absolute;left:690.06px;top:510.29px;font-size:11.3px;line-height:1;color:#a6a6ae;white-space:nowrap;letter-spacing:-0.349px;">Selecciona una fecha</span>
<svg style="position:absolute;left:855.80px;top:511.00px;" width="10.40" height="11.00" viewBox="0 0 10.4 11"><rect x=".6" y="1.8" width="9.2" height="8.6" fill="none" stroke="#555458" stroke-width="1.2"/><rect x=".6" y="1.2" width="9.2" height="2.6" fill="#555458"/><rect x="2" y="0" width="1.5" height="2" fill="#555458"/><rect x="6.9" y="0" width="1.5" height="2" fill="#555458"/><rect x="4" y="5.6" width="2.6" height="3" fill="#555458"/></svg>
<span style="position:absolute;left:905.26px;top:510.29px;font-size:11.3px;line-height:1;color:#555458;white-space:nowrap;letter-spacing:-0.359px;">Selecciona una fecha</span>
<svg style="position:absolute;left:934.60px;top:522.00px;" width="14.40" height="14.40" viewBox="0 0 14.4 14.4"><circle cx="7.2" cy="7.2" r="6.2" fill="none" stroke="#2a2a2a" stroke-width="1.4"/><path d="M4.7 4.7L9.7 9.7M9.7 4.7L4.7 9.7" stroke="#2a2a2a" stroke-width="1.6"/></svg>
<svg style="position:absolute;left:1090.20px;top:508.90px;" width="15.00" height="14.00" viewBox="0 0 15 14"><path d="M3.2 6.9A5.1 5.1 0 1 1 4.7 10.5" fill="none" stroke="#4563c4" stroke-width="1.9"/><path d="M0.2 5.2L6 6.2L2.2 9.6Z" fill="#4563c4"/></svg>
<svg style="position:absolute;left:1090.20px;top:562.70px;" width="15.00" height="14.00" viewBox="0 0 15 14"><path d="M3.2 6.9A5.1 5.1 0 1 1 4.7 10.5" fill="none" stroke="#4563c4" stroke-width="1.9"/><path d="M0.2 5.2L6 6.2L2.2 9.6Z" fill="#4563c4"/></svg>
<svg style="position:absolute;left:69.00px;top:564.00px;" width="16.20" height="16.20" viewBox="0 0 16 16"><rect width="16" height="16" rx="2.2" fill="#5b6ff0"/><path d="M2.6 7.4L7 13L14.6 1.6" fill="none" stroke="#fff" stroke-width="2.5"/></svg>
<span style="position:absolute;left:98.51px;top:561.26px;font-size:16.4px;line-height:1;color:#3c3a3a;white-space:nowrap;letter-spacing:0.271px;">Grupo A</span>
<div style="position:absolute;left:246.00px;top:552.40px;width:196.60px;height:33.20px;background:#c8c8d2;"></div>
<span style="position:absolute;left:260.19px;top:561.96px;font-size:13.7px;line-height:1;color:#3c3a3a;white-space:nowrap;letter-spacing:-0.210px;">Selecciona una categoría</span>
<svg style="position:absolute;left:417.00px;top:565.00px;" width="14.00" height="10.00" viewBox="-1 -1 14.00 10.00"><polyline points="1.25,1.12 6.00,6.45 10.75,1.12" fill="none" stroke="#3c3a3a" stroke-width="2.5" stroke-linejoin="miter"/></svg>
<div style="position:absolute;left:455.00px;top:552.40px;width:164.00px;height:33.20px;background:#dcdce3;"></div>
<span style="position:absolute;left:469.19px;top:561.96px;font-size:13.7px;line-height:1;color:#9c9ca2;white-space:nowrap;letter-spacing:-0.105px;">Selecciona intentos</span>
<svg style="position:absolute;left:593.40px;top:565.00px;" width="13.60" height="10.00" viewBox="-1 -1 13.60 10.00"><polyline points="1.25,1.12 5.80,6.45 10.35,1.12" fill="none" stroke="#9c9ca2" stroke-width="2.5" stroke-linejoin="miter"/></svg>
<span style="position:absolute;left:866.07px;top:555.76px;font-size:14.4px;line-height:1;color:#c6c6d2;white-space:nowrap;letter-spacing:-0.294px;-webkit-text-stroke:0.25px #c6c6d2;">Selecciona una fecha</span>
<div style="position:absolute;left:846.00px;top:580.40px;width:203.00px;height:2.60px;background:#d8d8e0;"></div>
<div style="position:absolute;left:848.00px;top:610.00px;width:195.60px;height:32.60px;background:#c8c8d2;"></div>
<div style="position:absolute;left:968.00px;top:610.00px;width:1.00px;height:32.60px;background:#cccdd6;"></div>
<span style="position:absolute;left:860.59px;top:620.17px;font-size:13.8px;line-height:1;color:#3c3a3a;white-space:nowrap;letter-spacing:-0.088px;">Más opciones...</span>
<span style="position:absolute;left:981.59px;top:620.17px;font-size:13.8px;line-height:1;color:#3c3a3a;white-space:nowrap;letter-spacing:-0.287px;">Guardar</span>
<div style="position:absolute;left:83px;top:610px;width:124.6px;height:28px;border-radius:15px;background:#5165f2;border:1px solid #3a3a50;border-bottom-color:#8a92d8;box-shadow:0 0 1px rgba(0,0,0,.4)"></div>
<span style="position:absolute;left:109.17px;top:618.43px;font-size:14.2px;line-height:1;color:#fff;white-space:nowrap;letter-spacing:0.255px;-webkit-text-stroke:0.4px #fff;">Publicar</span>
<div style="position:absolute;left:189px;top:616px;width:15px;height:15px;border-radius:50%;background:#9a9a9c;border:1px solid #d0d0e8"></div>
<div style="position:absolute;left:1141px;top:434.2px;width:24.6px;height:24.6px;border-radius:50%;background:#c8c8d2"></div>
<svg style="position:absolute;left:1147.00px;top:441.00px;" width="13.00" height="13.00" viewBox="0 0 13 13"><circle cx="6.5" cy="6.5" r="6.5" fill="#3a3a3a"/><path d="M4.1 4.1L8.9 8.9M8.9 4.1L4.1 8.9" stroke="#e6e6e6" stroke-width="1.6"/></svg>
<div style="position:absolute;left:625.8px;top:519.9px;width:306.4px;height:217.1px;background:#fff;border:1px solid #c2c2ca;box-shadow:2px 5px 8px -3px rgba(0,0,0,.5)"></div>
<svg style="position:absolute;left:639.90px;top:531.10px;" width="7.00" height="13.60" viewBox="0 0 7 13.6"><path d="M7 0V13.6L0 6.8Z" fill="#7a7a7a"/></svg>
<svg style="position:absolute;left:847.00px;top:531.10px;" width="7.00" height="13.60" viewBox="0 0 7 13.6"><path d="M0 0V13.6L7 6.8Z" fill="#7a7a7a"/></svg>
<svg style="position:absolute;left:662.90px;top:532.20px;" width="14.20" height="11.80" viewBox="0 0 14.2 11.8"><path d="M7.1 0L14.2 7.5H12.3V11.8H9.2V9.6Q9.2 7.7 7.1 7.7Q5 7.7 5 9.6V11.8H2V7.5H0Z" fill="#7a7a7a"/></svg>
<span style="position:absolute;left:711.15px;top:530.25px;font-size:15px;line-height:1;color:#3c3a3a;white-space:nowrap;font-weight:700;letter-spacing:-0.045px;">Octubre</span>
<svg style="position:absolute;left:770.00px;top:537.00px;" width="5.60" height="2.80" viewBox="0 0 5.6 2.8"><path d="M0 0H5.6L2.8 2.8Z" fill="#777"/></svg>
<span style="position:absolute;left:788.55px;top:530.25px;font-size:15px;line-height:1;color:#3c3a3a;white-space:nowrap;font-weight:700;letter-spacing:-0.271px;">2017</span>
<svg style="position:absolute;left:823.00px;top:537.00px;" width="5.60" height="2.80" viewBox="0 0 5.6 2.8"><path d="M0 0H5.6L2.8 2.8Z" fill="#777"/></svg>
<svg style="position:absolute;left:889.00px;top:535.20px;" width="14.00" height="7.00" viewBox="0 0 14 7"><path d="M0 7H14L7 0Z" fill="#7a7a7a"/></svg>
<svg style="position:absolute;left:889.00px;top:715.00px;" width="14.00" height="7.00" viewBox="0 0 14 7"><path d="M0 0H14L7 7Z" fill="#7a7a7a"/></svg>
<div style="position:absolute;left:634.80px;top:554.40px;width:211.00px;height:176.00px;background:#c3c3cb;"></div>
<div style="position:absolute;left:635.80px;top:555.40px;width:29.00px;height:24.00px;background:#dedee6;"></div>
<div style="position:absolute;left:635.80px;top:555.40px;width:29px;height:24px;line-height:24px;text-align:center;font-size:12.9px;font-weight:700;color:#8b8b8d;letter-spacing:-0.2px">Lun</div>
<div style="position:absolute;left:665.80px;top:555.40px;width:29.00px;height:24.00px;background:#dedee6;"></div>
<div style="position:absolute;left:665.80px;top:555.40px;width:29px;height:24px;line-height:24px;text-align:center;font-size:12.9px;font-weight:700;color:#8b8b8d;letter-spacing:-0.2px">Mar</div>
<div style="position:absolute;left:695.80px;top:555.40px;width:29.00px;height:24.00px;background:#dedee6;"></div>
<div style="position:absolute;left:695.80px;top:555.40px;width:29px;height:24px;line-height:24px;text-align:center;font-size:12.9px;font-weight:700;color:#8b8b8d;letter-spacing:-0.2px">Miér</div>
<div style="position:absolute;left:725.80px;top:555.40px;width:29.00px;height:24.00px;background:#dedee6;"></div>
<div style="position:absolute;left:725.80px;top:555.40px;width:29px;height:24px;line-height:24px;text-align:center;font-size:12.9px;font-weight:700;color:#8b8b8d;letter-spacing:-0.2px">Jue</div>
<div style="position:absolute;left:755.80px;top:555.40px;width:29.00px;height:24.00px;background:#dedee6;"></div>
<div style="position:absolute;left:755.80px;top:555.40px;width:29px;height:24px;line-height:24px;text-align:center;font-size:12.9px;font-weight:700;color:#8b8b8d;letter-spacing:-0.2px">Vie</div>
<div style="position:absolute;left:785.80px;top:555.40px;width:29.00px;height:24.00px;background:#dedee6;"></div>
<div style="position:absolute;left:785.80px;top:555.40px;width:29px;height:24px;line-height:24px;text-align:center;font-size:12.9px;font-weight:700;color:#8b8b8d;letter-spacing:-0.2px">Sáb</div>
<div style="position:absolute;left:815.80px;top:555.40px;width:29.00px;height:24.00px;background:#dedee6;"></div>
<div style="position:absolute;left:815.80px;top:555.40px;width:29px;height:24px;line-height:24px;text-align:center;font-size:12.9px;font-weight:700;color:#8b8b8d;letter-spacing:-0.2px">Dom</div>
<div style="position:absolute;left:635.80px;top:580.40px;width:29.00px;height:24.00px;background:#f0f0f5;"></div>
<div style="position:absolute;left:635.80px;top:580.40px;width:24.40px;height:24px;line-height:24px;text-align:right;font-size:13.2px;font-weight:400;color:#9a9a9e;letter-spacing:-0.35px">25</div>
<div style="position:absolute;left:665.80px;top:580.40px;width:29.00px;height:24.00px;background:#f0f0f5;"></div>
<div style="position:absolute;left:665.80px;top:580.40px;width:24.40px;height:24px;line-height:24px;text-align:right;font-size:13.2px;font-weight:400;color:#9a9a9e;letter-spacing:-0.35px">26</div>
<div style="position:absolute;left:695.80px;top:580.40px;width:29.00px;height:24.00px;background:#f0f0f5;"></div>
<div style="position:absolute;left:695.80px;top:580.40px;width:24.40px;height:24px;line-height:24px;text-align:right;font-size:13.2px;font-weight:400;color:#9a9a9e;letter-spacing:-0.35px">27</div>
<div style="position:absolute;left:725.80px;top:580.40px;width:29.00px;height:24.00px;background:#f0f0f5;"></div>
<div style="position:absolute;left:725.80px;top:580.40px;width:24.40px;height:24px;line-height:24px;text-align:right;font-size:13.2px;font-weight:400;color:#9a9a9e;letter-spacing:-0.35px">28</div>
<div style="position:absolute;left:755.80px;top:580.40px;width:29.00px;height:24.00px;background:#f0f0f5;"></div>
<div style="position:absolute;left:755.80px;top:580.40px;width:24.40px;height:24px;line-height:24px;text-align:right;font-size:13.2px;font-weight:400;color:#9a9a9e;letter-spacing:-0.35px">29</div>
<div style="position:absolute;left:785.80px;top:580.40px;width:29.00px;height:24.00px;background:#f0f0f5;"></div>
<div style="position:absolute;left:785.80px;top:580.40px;width:24.40px;height:24px;line-height:24px;text-align:right;font-size:13.2px;font-weight:400;color:#9a9a9e;letter-spacing:-0.35px">30</div>
<div style="position:absolute;left:815.80px;top:580.40px;width:29.00px;height:24.00px;background:#e4e4ea;"></div>
<div style="position:absolute;left:815.80px;top:580.40px;width:24.40px;height:24px;line-height:24px;text-align:right;font-size:13.2px;font-weight:400;color:#4c4c4e;letter-spacing:-0.35px">1</div>
<div style="position:absolute;left:635.80px;top:605.40px;width:29.00px;height:24.00px;background:#e4e4ea;"></div>
<div style="position:absolute;left:635.80px;top:605.40px;width:24.40px;height:24px;line-height:24px;text-align:right;font-size:13.2px;font-weight:400;color:#4c4c4e;letter-spacing:-0.35px">2</div>
<div style="position:absolute;left:665.80px;top:605.40px;width:29.00px;height:24.00px;background:#e4e4ea;"></div>
<div style="position:absolute;left:665.80px;top:605.40px;width:24.40px;height:24px;line-height:24px;text-align:right;font-size:13.2px;font-weight:400;color:#4c4c4e;letter-spacing:-0.35px">3</div>
<div style="position:absolute;left:695.80px;top:605.40px;width:29.00px;height:24.00px;background:#e4e4ea;"></div>
<div style="position:absolute;left:695.80px;top:605.40px;width:24.40px;height:24px;line-height:24px;text-align:right;font-size:13.2px;font-weight:400;color:#4c4c4e;letter-spacing:-0.35px">4</div>
<div style="position:absolute;left:725.80px;top:605.40px;width:29.00px;height:24.00px;background:#e4e4ea;"></div>
<div style="position:absolute;left:725.80px;top:605.40px;width:24.40px;height:24px;line-height:24px;text-align:right;font-size:13.2px;font-weight:400;color:#4c4c4e;letter-spacing:-0.35px">5</div>
<div style="position:absolute;left:755.80px;top:605.40px;width:29.00px;height:24.00px;background:#e4e4ea;"></div>
<div style="position:absolute;left:755.80px;top:605.40px;width:24.40px;height:24px;line-height:24px;text-align:right;font-size:13.2px;font-weight:400;color:#4c4c4e;letter-spacing:-0.35px">6</div>
<div style="position:absolute;left:785.80px;top:605.40px;width:29.00px;height:24.00px;background:#e4e4ea;"></div>
<div style="position:absolute;left:785.80px;top:605.40px;width:24.40px;height:24px;line-height:24px;text-align:right;font-size:13.2px;font-weight:400;color:#4c4c4e;letter-spacing:-0.35px">7</div>
<div style="position:absolute;left:815.80px;top:605.40px;width:29.00px;height:24.00px;background:#e4e4ea;"></div>
<div style="position:absolute;left:815.80px;top:605.40px;width:24.40px;height:24px;line-height:24px;text-align:right;font-size:13.2px;font-weight:400;color:#4c4c4e;letter-spacing:-0.35px">8</div>
<div style="position:absolute;left:635.80px;top:630.40px;width:29.00px;height:24.00px;background:#e4e4ea;"></div>
<div style="position:absolute;left:635.80px;top:630.40px;width:24.40px;height:24px;line-height:24px;text-align:right;font-size:13.2px;font-weight:400;color:#4c4c4e;letter-spacing:-0.35px">9</div>
<div style="position:absolute;left:665.80px;top:630.40px;width:29.00px;height:24.00px;background:#e4e4ea;"></div>
<div style="position:absolute;left:665.80px;top:630.40px;width:24.40px;height:24px;line-height:24px;text-align:right;font-size:13.2px;font-weight:400;color:#4c4c4e;letter-spacing:-0.35px">10</div>
<div style="position:absolute;left:695.80px;top:630.40px;width:29.00px;height:24.00px;background:#e4e4ea;"></div>
<div style="position:absolute;left:695.80px;top:630.40px;width:24.40px;height:24px;line-height:24px;text-align:right;font-size:13.2px;font-weight:400;color:#4c4c4e;letter-spacing:-0.35px">11</div>
<div style="position:absolute;left:725.80px;top:630.40px;width:29.00px;height:24.00px;background:#e4e4ea;"></div>
<div style="position:absolute;left:725.80px;top:630.40px;width:24.40px;height:24px;line-height:24px;text-align:right;font-size:13.2px;font-weight:400;color:#4c4c4e;letter-spacing:-0.35px">12</div>
<div style="position:absolute;left:755.80px;top:630.40px;width:29.00px;height:24.00px;background:#e4e4ea;"></div>
<div style="position:absolute;left:755.80px;top:630.40px;width:24.40px;height:24px;line-height:24px;text-align:right;font-size:13.2px;font-weight:400;color:#4c4c4e;letter-spacing:-0.35px">13</div>
<div style="position:absolute;left:785.80px;top:630.40px;width:29.00px;height:24.00px;background:#e4e4ea;"></div>
<div style="position:absolute;left:785.80px;top:630.40px;width:24.40px;height:24px;line-height:24px;text-align:right;font-size:13.2px;font-weight:400;color:#4c4c4e;letter-spacing:-0.35px">14</div>
<div style="position:absolute;left:815.80px;top:630.40px;width:29.00px;height:24.00px;background:#e4e4ea;"></div>
<div style="position:absolute;left:815.80px;top:630.40px;width:24.40px;height:24px;line-height:24px;text-align:right;font-size:13.2px;font-weight:400;color:#4c4c4e;letter-spacing:-0.35px">15</div>
<div style="position:absolute;left:635.80px;top:655.40px;width:29.00px;height:24.00px;background:#5165f2;"></div>
<div style="position:absolute;left:635.80px;top:655.40px;width:24.40px;height:24px;line-height:24px;text-align:right;font-size:13.2px;font-weight:700;color:#fff;letter-spacing:-0.35px">16</div>
<div style="position:absolute;left:665.80px;top:655.40px;width:29.00px;height:24.00px;background:#e4e4ea;"></div>
<div style="position:absolute;left:665.80px;top:655.40px;width:24.40px;height:24px;line-height:24px;text-align:right;font-size:13.2px;font-weight:400;color:#4c4c4e;letter-spacing:-0.35px">17</div>
<div style="position:absolute;left:695.80px;top:655.40px;width:29.00px;height:24.00px;background:#e4e4ea;"></div>
<div style="position:absolute;left:695.80px;top:655.40px;width:24.40px;height:24px;line-height:24px;text-align:right;font-size:13.2px;font-weight:400;color:#4c4c4e;letter-spacing:-0.35px">18</div>
<div style="position:absolute;left:725.80px;top:655.40px;width:29.00px;height:24.00px;background:#e4e4ea;"></div>
<div style="position:absolute;left:725.80px;top:655.40px;width:24.40px;height:24px;line-height:24px;text-align:right;font-size:13.2px;font-weight:400;color:#4c4c4e;letter-spacing:-0.35px">19</div>
<div style="position:absolute;left:755.80px;top:655.40px;width:29.00px;height:24.00px;background:#e4e4ea;"></div>
<div style="position:absolute;left:755.80px;top:655.40px;width:24.40px;height:24px;line-height:24px;text-align:right;font-size:13.2px;font-weight:400;color:#4c4c4e;letter-spacing:-0.35px">20</div>
<div style="position:absolute;left:785.80px;top:655.40px;width:29.00px;height:24.00px;background:#e4e4ea;"></div>
<div style="position:absolute;left:785.80px;top:655.40px;width:24.40px;height:24px;line-height:24px;text-align:right;font-size:13.2px;font-weight:400;color:#4c4c4e;letter-spacing:-0.35px">21</div>
<div style="position:absolute;left:815.80px;top:655.40px;width:29.00px;height:24.00px;background:#e4e4ea;"></div>
<div style="position:absolute;left:815.80px;top:655.40px;width:24.40px;height:24px;line-height:24px;text-align:right;font-size:13.2px;font-weight:400;color:#4c4c4e;letter-spacing:-0.35px">22</div>
<div style="position:absolute;left:635.80px;top:680.40px;width:29.00px;height:24.00px;background:#e4e4ea;"></div>
<div style="position:absolute;left:635.80px;top:680.40px;width:24.40px;height:24px;line-height:24px;text-align:right;font-size:13.2px;font-weight:400;color:#4c4c4e;letter-spacing:-0.35px">23</div>
<div style="position:absolute;left:665.80px;top:680.40px;width:29.00px;height:24.00px;background:#e4e4ea;"></div>
<div style="position:absolute;left:665.80px;top:680.40px;width:24.40px;height:24px;line-height:24px;text-align:right;font-size:13.2px;font-weight:400;color:#4c4c4e;letter-spacing:-0.35px">24</div>
<div style="position:absolute;left:695.80px;top:680.40px;width:29.00px;height:24.00px;background:#e4e4ea;"></div>
<div style="position:absolute;left:695.80px;top:680.40px;width:24.40px;height:24px;line-height:24px;text-align:right;font-size:13.2px;font-weight:400;color:#4c4c4e;letter-spacing:-0.35px">25</div>
<div style="position:absolute;left:725.80px;top:680.40px;width:29.00px;height:24.00px;background:#e4e4ea;"></div>
<div style="position:absolute;left:725.80px;top:680.40px;width:24.40px;height:24px;line-height:24px;text-align:right;font-size:13.2px;font-weight:400;color:#4c4c4e;letter-spacing:-0.35px">26</div>
<div style="position:absolute;left:755.80px;top:680.40px;width:29.00px;height:24.00px;background:#e4e4ea;"></div>
<div style="position:absolute;left:755.80px;top:680.40px;width:24.40px;height:24px;line-height:24px;text-align:right;font-size:13.2px;font-weight:400;color:#4c4c4e;letter-spacing:-0.35px">27</div>
<div style="position:absolute;left:785.80px;top:680.40px;width:29.00px;height:24.00px;background:#e4e4ea;"></div>
<div style="position:absolute;left:785.80px;top:680.40px;width:24.40px;height:24px;line-height:24px;text-align:right;font-size:13.2px;font-weight:400;color:#4c4c4e;letter-spacing:-0.35px">28</div>
<div style="position:absolute;left:815.80px;top:680.40px;width:29.00px;height:24.00px;background:#e4e4ea;"></div>
<div style="position:absolute;left:815.80px;top:680.40px;width:24.40px;height:24px;line-height:24px;text-align:right;font-size:13.2px;font-weight:400;color:#4c4c4e;letter-spacing:-0.35px">29</div>
<div style="position:absolute;left:635.80px;top:705.40px;width:29.00px;height:24.00px;background:#e4e4ea;"></div>
<div style="position:absolute;left:635.80px;top:705.40px;width:24.40px;height:24px;line-height:24px;text-align:right;font-size:13.2px;font-weight:400;color:#4c4c4e;letter-spacing:-0.35px">30</div>
<div style="position:absolute;left:665.80px;top:705.40px;width:29.00px;height:24.00px;background:#e4e4ea;"></div>
<div style="position:absolute;left:665.80px;top:705.40px;width:24.40px;height:24px;line-height:24px;text-align:right;font-size:13.2px;font-weight:400;color:#4c4c4e;letter-spacing:-0.35px">31</div>
<div style="position:absolute;left:695.80px;top:705.40px;width:29.00px;height:24.00px;background:#f0f0f5;"></div>
<div style="position:absolute;left:695.80px;top:705.40px;width:24.40px;height:24px;line-height:24px;text-align:right;font-size:13.2px;font-weight:400;color:#9a9a9e;letter-spacing:-0.35px">1</div>
<div style="position:absolute;left:725.80px;top:705.40px;width:29.00px;height:24.00px;background:#f0f0f5;"></div>
<div style="position:absolute;left:725.80px;top:705.40px;width:24.40px;height:24px;line-height:24px;text-align:right;font-size:13.2px;font-weight:400;color:#9a9a9e;letter-spacing:-0.35px">2</div>
<div style="position:absolute;left:755.80px;top:705.40px;width:29.00px;height:24.00px;background:#f0f0f5;"></div>
<div style="position:absolute;left:755.80px;top:705.40px;width:24.40px;height:24px;line-height:24px;text-align:right;font-size:13.2px;font-weight:400;color:#9a9a9e;letter-spacing:-0.35px">3</div>
<div style="position:absolute;left:785.80px;top:705.40px;width:29.00px;height:24.00px;background:#f0f0f5;"></div>
<div style="position:absolute;left:785.80px;top:705.40px;width:24.40px;height:24px;line-height:24px;text-align:right;font-size:13.2px;font-weight:400;color:#9a9a9e;letter-spacing:-0.35px">4</div>
<div style="position:absolute;left:815.80px;top:705.40px;width:29.00px;height:24.00px;background:#f0f0f5;"></div>
<div style="position:absolute;left:815.80px;top:705.40px;width:24.40px;height:24px;line-height:24px;text-align:right;font-size:13.2px;font-weight:400;color:#9a9a9e;letter-spacing:-0.35px">5</div>
<div style="position:absolute;left:867.00px;top:553.40px;width:58.00px;height:151.00px;background:#c3c3cb;"></div>
<div style="position:absolute;left:867.00px;top:553.40px;width:58.00px;height:25.00px;background:#5165f2;"></div>
<div style="position:absolute;left:867.00px;top:554.40px;width:57.40px;height:24px;line-height:24px;text-align:center;font-size:13.2px;font-weight:700;color:#fff;letter-spacing:-0.3px">00:00</div>
<div style="position:absolute;left:868.00px;top:579.40px;width:56.00px;height:24.00px;background:#e4e4ea;"></div>
<div style="position:absolute;left:867.00px;top:580.40px;width:57.40px;height:24px;line-height:24px;text-align:center;font-size:13.2px;font-weight:400;color:#555458;letter-spacing:-0.3px">00:30</div>
<div style="position:absolute;left:868.00px;top:604.40px;width:56.00px;height:24.00px;background:#e4e4ea;"></div>
<div style="position:absolute;left:867.00px;top:605.40px;width:57.40px;height:24px;line-height:24px;text-align:center;font-size:13.2px;font-weight:400;color:#555458;letter-spacing:-0.3px">01:00</div>
<div style="position:absolute;left:868.00px;top:629.40px;width:56.00px;height:24.00px;background:#e4e4ea;"></div>
<div style="position:absolute;left:867.00px;top:630.40px;width:57.40px;height:24px;line-height:24px;text-align:center;font-size:13.2px;font-weight:400;color:#555458;letter-spacing:-0.3px">01:30</div>
<div style="position:absolute;left:868.00px;top:654.40px;width:56.00px;height:24.00px;background:#e4e4ea;"></div>
<div style="position:absolute;left:867.00px;top:655.40px;width:57.40px;height:24px;line-height:24px;text-align:center;font-size:13.2px;font-weight:400;color:#555458;letter-spacing:-0.3px">02:00</div>
<div style="position:absolute;left:868.00px;top:679.40px;width:56.00px;height:24.00px;background:#e4e4ea;"></div>
<div style="position:absolute;left:867.00px;top:680.40px;width:57.40px;height:24px;line-height:24px;text-align:center;font-size:13.2px;font-weight:400;color:#555458;letter-spacing:-0.3px">02:30</div>
<div style="position:absolute;left:917.4px;top:553.6px;width:6.8px;height:18px;border-radius:3.4px;background:#b2b2ba"></div>
</body></html>
